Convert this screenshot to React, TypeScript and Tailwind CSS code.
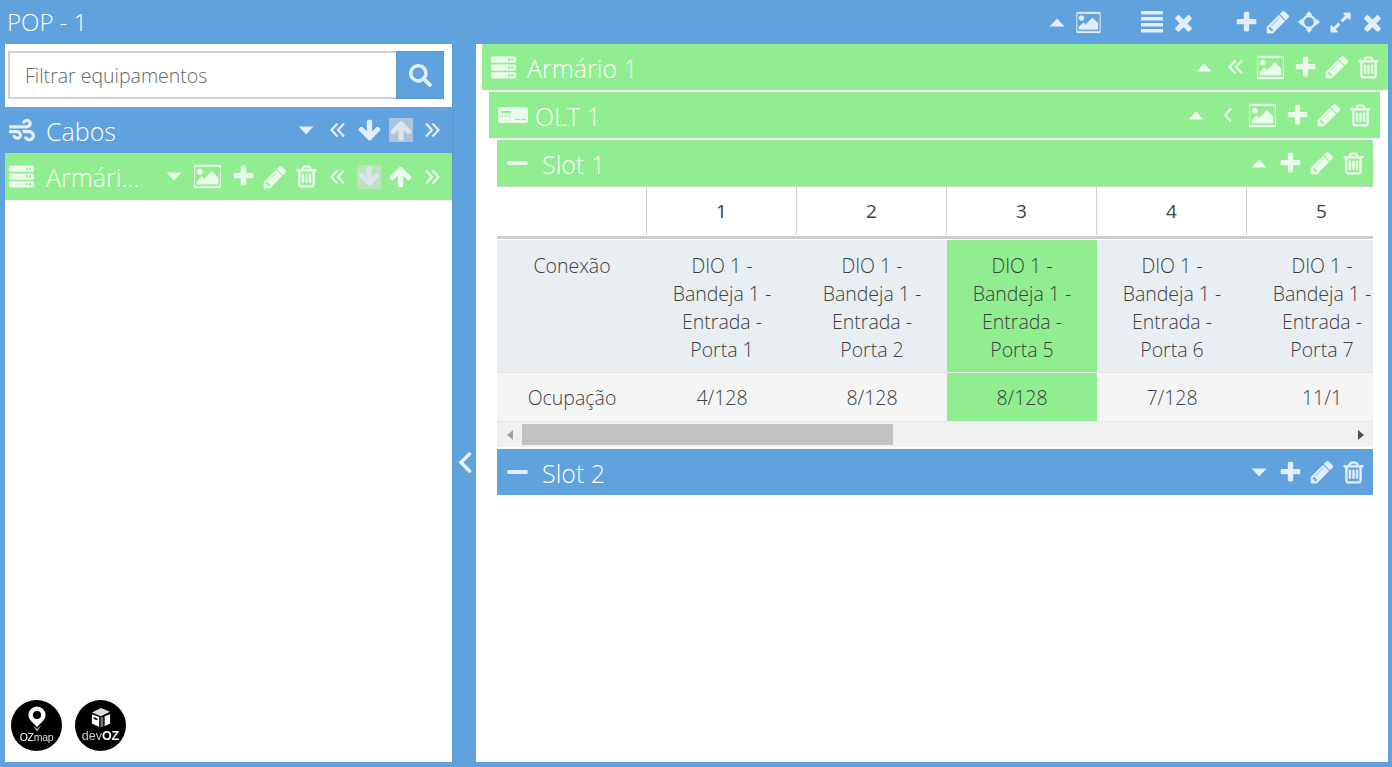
import React from 'react';
import { FaExpandAlt, FaSearch, FaServer, FaWind } from 'react-icons/fa';

const FA4 = {
  plus: 'M1600 736v192q0 40-28 68t-68 28h-416v416q0 40-28 68t-68 28h-192q-40 0-68-28t-28-68v-416h-416q-40 0-68-28t-28-68v-192q0-40 28-68t68-28h416v-416q0-40 28-68t68-28h192q40 0 68 28t28 68v416h416q40 0 68 28t28 68z',
  pencil: 'M491 1536l91-91-235-235-91 91v107h128v128h107zm523-928q0-22-22-22-10 0-17 7l-542 542q-7 7-7 17 0 22 22 22 10 0 17-7l542-542q7-7 7-17zm-54-192l416 416-832 832h-416v-416zm683 96q0 53-37 90l-166 166-416-416 166-165q36-38 90-38 53 0 91 38l235 234q37 39 37 91z',
  trash: 'M704 736v576q0 14-9 23t-23 9h-64q-14 0-23-9t-9-23v-576q0-14 9-23t23-9h64q14 0 23 9t9 23zm256 0v576q0 14-9 23t-23 9h-64q-14 0-23-9t-9-23v-576q0-14 9-23t23-9h64q14 0 23 9t9 23zm256 0v576q0 14-9 23t-23 9h-64q-14 0-23-9t-9-23v-576q0-14 9-23t23-9h64q14 0 23 9t9 23zm128 724v-948h-896v948q0 22 7 40.5t14.5 27 10.5 8.5h832q3 0 10.5-8.5t14.5-27 7-40.5zm-672-1076h448l-48-117q-7-9-17-11h-317q-10 2-17 11zm928 32v64q0 14-9 23t-23 9h-96v948q0 83-47 143.5t-113 60.5h-832q-66 0-113-58.5t-47-141.5v-952h-96q-14 0-23-9t-9-23v-64q0-14 9-23t23-9h309l70-167q15-37 54-63t79-26h320q40 0 79 26t54 63l70 167h309q14 0 23 9t9 23z',
  image: 'M576 576q0 80-56 136t-136 56-136-56-56-136 56-136 136-56 136 56 56 136zm1024 384v448h-1408v-192l320-320 160 160 512-512zm96-704h-1600q-13 0-22.5 9.5t-9.5 22.5v1216q0 13 9.5 22.5t22.5 9.5h1600q13 0 22.5-9.5t9.5-22.5v-1216q0-13-9.5-22.5t-22.5-9.5zm160 32v1216q0 66-47 113t-113 47h-1600q-66 0-113-47t-47-113v-1216q0-66 47-113t113-47h1600q66 0 113 47t47 113z',
  times: 'M1490 1322q0 40-28 68l-136 136q-28 28-68 28t-68-28l-294-294-294 294q-28 28-68 28t-68-28l-136-136q-28-28-28-68t28-68l294-294-294-294q-28-28-28-68t28-68l136-136q28-28 68-28t68 28l294 294 294-294q28-28 68-28t68 28l136 136q28 28 28 68t-28 68l-294 294 294 294q28 28 28 68z',
  down: 'M1675 832q0 53-37 90l-651 652q-39 37-91 37-53 0-90-37l-651-652q-38-36-38-90 0-53 38-91l74-75q39-37 91-37 53 0 90 37l294 294v-704q0-52 38-90t90-38h128q52 0 90 38t38 90v704l294-294q37-37 90-37 52 0 91 37l75 75q37 39 37 91z',
  up: 'M1675 971q0 51-37 90l-75 75q-38 38-91 38-54 0-90-38l-294-293v704q0 52-37.5 84.5t-90.5 32.5h-128q-53 0-90.5-32.5t-37.5-84.5v-704l-294 293q-36 38-90 38t-90-38l-75-75q-38-38-38-90 0-53 38-91l651-651q35-37 90-37 54 0 91 37l651 651q37 39 37 91z',
};

const Fa4 = ({ d, className, heavy }: { d: string; className?: string; heavy?: number }) => (
  <svg viewBox="0 0 1792 1792" fill="currentColor" stroke="currentColor" strokeWidth={heavy ?? 0} className={className}>
    <path d={d} />
  </svg>
);

const Plus = () => <Fa4 d={FA4.plus} className="w-[25px] h-[25px]" />;
const Pencil = () => <Fa4 d={FA4.pencil} heavy={25} className="w-[26px] h-[26px]" />;
const Trash = () => <Fa4 d={FA4.trash} heavy={45} className="w-[25px] h-[25px]" />;
const Picture = () => <Fa4 d={FA4.image} heavy={20} className="w-[27px] h-[27px]" />;
const Times = () => <Fa4 d={FA4.times} className="w-[25px] h-[25px]" />;
const ArrowDown = () => <Fa4 d={FA4.down} className="w-[25px] h-[25px]" />;
const ArrowUp = () => <Fa4 d={FA4.up} className="w-[25px] h-[25px]" />;

const CaretUp = () => (
  <svg viewBox="0 0 16 9" fill="currentColor" className="w-[16px] h-[9px]">
    <path d="M8 0.5 15.5 8.5H0.5Z" />
  </svg>
);
const CaretDown = () => (
  <svg viewBox="0 0 16 9" fill="currentColor" className="w-[16px] h-[9px]">
    <path d="M0.5 0.5H15.5L8 8.5Z" />
  </svg>
);
const DoubleLeft = () => (
  <svg viewBox="0 0 16 16" fill="none" stroke="currentColor" strokeWidth="2.2" className="w-[16px] h-[16px]">
    <path d="M7.5 1.5 1.5 8l6 6.5M14 1.5 8 8l6 6.5" />
  </svg>
);
const DoubleRight = () => (
  <svg viewBox="0 0 16 16" fill="none" stroke="currentColor" strokeWidth="2.2" className="w-[16px] h-[16px]">
    <path d="M2 1.5 8 8l-6 6.5M8.5 1.5l6 6.5-6 6.5" />
  </svg>
);
const SingleLeft = () => (
  <svg viewBox="0 0 10 16" fill="none" stroke="currentColor" strokeWidth="2.2" className="w-[10px] h-[16px]">
    <path d="M8 1.5 2 8l6 6.5" />
  </svg>
);
const Bars = () => (
  <svg viewBox="0 0 22 22" fill="currentColor" className="w-[22px] h-[22px]">
    <rect x="0" y="0" width="22" height="3.6" rx="0.6" />
    <rect x="0" y="6" width="22" height="3.6" rx="0.6" />
    <rect x="0" y="12" width="22" height="3.6" rx="0.6" />
    <rect x="0" y="18" width="22" height="3.6" rx="0.6" />
  </svg>
);
const Move = () => (
  <svg viewBox="0 0 22 22" className="w-[22px] h-[22px]">
    <circle cx="11" cy="11" r="6" fill="none" stroke="currentColor" strokeWidth="2.4" />
    <path fill="currentColor" d="M11 0l3.4 4H7.600zM11 22l-3.400-4h6.800zM0 11l4-3.400v6.800zM22 11l-4 3.400V7.600z" />
  </svg>
);
const Minus = () => <div className="w-[21px] h-[4px] rounded-full bg-current" />;
const OltIcon = () => (
  <svg viewBox="0 0 30 16" className="w-[30px] h-[16px]">
    <path
      fill="currentColor"
      fillRule="evenodd"
      d="M2 0h26a2 2 0 0 1 2 2v12a2 2 0 0 1-2 2H2a2 2 0 0 1-2-2V2a2 2 0 0 1 2-2zM3 4v2h10V4zM3 8.500v1.200h2V8.500zM6.500 8.500v1.200h2V8.500zM10 8.500v1.200h2V8.500zM17 12v1h5v-1zM23 12v1h5v-1z"
    />
  </svg>
);

const Tool = ({ children, active }: { children: React.ReactNode; active?: boolean }) => (
  <div className="w-[31.5px] h-[32px] shrink-0 flex items-center justify-center">
    {active ? (
      <div className="w-[24px] h-[24px] flex items-center justify-center bg-[#dcdcdc]/60 text-[#dce4ea] overflow-hidden">{children}</div>
    ) : (
      children
    )}
  </div>
);

const Bar = ({
  green,
  icon,
  title,
  tall,
  children,
}: {
  green?: boolean;
  icon: React.ReactNode;
  title: string;
  tall?: boolean;
  children: React.ReactNode;
}) => (
  <div className={`${tall ? 'h-[47px]' : 'h-[46px]'} flex items-center shrink-0 pr-[4px] ${green ? 'bg-[#90ee90] text-[#ebfaeb]' : 'bg-[#5fa2dd] text-[#e3eefa]'}`}>
    {icon}
    <span className="text-[25px] font-light leading-none whitespace-nowrap text-white mt-[2px]">{title}</span>
    <div className="ml-auto flex items-center">{children}</div>
  </div>
);

const columns = [
  { n: 1, con: 'Porta 1', occ: '4/128' },
  { n: 2, con: 'Porta 2', occ: '8/128' },
  { n: 3, con: 'Porta 5', occ: '8/128', hit: true },
  { n: 4, con: 'Porta 6', occ: '7/128' },
  { n: 5, con: 'Porta 7', occ: '11/1' },
];

const App: React.FC = () => {
  return (
    <div
      className="w-[1392px] h-[767px] bg-[#5fa2dd] flex flex-col overflow-hidden"
      style={{ fontFamily: '"Open Sans", sans-serif' }}
    >
      {/* Window header */}
      <div className="h-[44px] shrink-0 flex items-center pl-[7px] pr-[4px] text-[#e3eefa]">
        <span className="text-[24px] font-light leading-none text-white">POP - 1</span>
        <div className="ml-auto flex items-center">
          <Tool><CaretUp /></Tool>
          <Tool><div className="scale-90 flex"><Picture /></div></Tool>
          <div className="w-[32px]" />
          <Tool><Bars /></Tool>
          <Tool><Times /></Tool>
          <div className="w-[31.5px]" />
          <Tool><Plus /></Tool>
          <Tool><Pencil /></Tool>
          <Tool><Move /></Tool>
          <Tool><FaExpandAlt className="w-[23px] h-[23px]" /></Tool>
          <Tool><Times /></Tool>
        </div>
      </div>

      <div className="flex-1 flex pl-[5px] pr-[4px] pb-[5px] min-h-0">
        {/* Left tree */}
        <div className="w-[447px] shrink-0 bg-white flex flex-col relative">
          <div className="h-[63px] shrink-0 flex items-start pt-[7px] pl-[3px] pr-[8px]">
            <div className="flex-1 h-[48px] border-2 border-[#d0d0d0] border-r-0 flex items-center pl-[15px] pt-[2px] text-[19.5px] font-light text-[#666]">
              Filtrar equipamentos
            </div>
            <div className="w-[48px] h-[48px] bg-[#5fa2dd] border border-[#5795cc] flex items-center justify-center text-[#e3eefa]">
              <FaSearch className="w-[23px] h-[23px]" />
            </div>
          </div>
          <Bar icon={<div className="w-[41px] pl-[4px] flex"><FaWind className="w-[26px] h-[26px]" /></div>} title="Cabos">
            <Tool><CaretDown /></Tool>
            <Tool><DoubleLeft /></Tool>
            <Tool><ArrowDown /></Tool>
            <Tool active><ArrowUp /></Tool>
            <Tool><DoubleRight /></Tool>
          </Bar>
          <Bar green tall icon={<div className="w-[41px] pl-[4px] flex"><FaServer className="w-[25px] h-[25px]" /></div>} title="Armári...">
            <Tool><CaretDown /></Tool>
            <div className="w-[2.5px]" />
            <Tool><Picture /></Tool>
            <div className="w-[4px]" />
            <Tool><Plus /></Tool>
            <Tool><Pencil /></Tool>
            <Tool><Trash /></Tool>
            <Tool><DoubleLeft /></Tool>
            <Tool active><ArrowDown /></Tool>
            <Tool><ArrowUp /></Tool>
            <Tool><DoubleRight /></Tool>
          </Bar>
          <div className="absolute left-[6px] bottom-[11px] flex gap-[13px] blur-[0.3px]">
            <div className="w-[51px] h-[51px] rounded-full bg-black text-white flex flex-col items-center pt-[6px]">
              <svg viewBox="0 0 20 28" className="w-[18px] h-[26px]">
                <path fill="#fff" fillRule="evenodd" d="M10 0a9.500 9.500 0 0 1 9.500 9.500c0 4-3 6.500-4.500 8.500L10 23l-5-5C3.500 16 .5 13.500.5 9.500A9.500 9.500 0 0 1 10 0zm0 5a4.500 4.500 0 1 0 0 9 4.500 4.500 0 0 0 0-9z" />
                <path fill="#bbb" d="M5 21l5 7 5-7-5 4z" />
              </svg>
              <span className="text-[10.5px] leading-none tracking-tight font-medium" style={{ fontFamily: '"Liberation Sans", sans-serif' }}>
                OZ<span className="font-light text-[#ddd]">map</span>
              </span>
            </div>
            <div className="w-[51px] h-[51px] rounded-full bg-black text-white flex flex-col items-center pt-[8px]">
              <svg viewBox="0 0 22 22" className="w-[20px] h-[20px]">
                <path fill="#ddd" d="M1 5l10-5 10 4-10 5z" />
                <path fill="#fff" d="M1 7l8 3v11l-8-4zM15 9l6-2v10l-6 3z" />
                <path fill="#777" d="M10.500 10.500l3-1v11l-3 1z" />
                <path fill="#000" d="M3 10l4 1.500v2L3 12z" />
              </svg>
              <span className="text-[12.5px] leading-none mt-[2px] text-[#ccc] font-light" style={{ fontFamily: '"Liberation Sans", sans-serif' }}>
                dev<span className="font-bold text-white">OZ</span>
              </span>
            </div>
          </div>
        </div>

        {/* Splitter */}
        <div className="w-[24px] shrink-0 border-l border-[#5795cc] flex items-center justify-center text-[#eef5fc]">
          <svg viewBox="0 0 14 21" fill="none" stroke="currentColor" strokeWidth="3.5" strokeLinecap="round" className="w-[14px] h-[21px] mt-[118px]">
            <path d="M11.500 2 3 10.500 11.500 19" />
          </svg>
        </div>

        {/* Right detail */}
        <div className="flex-1 min-w-0 bg-white pl-[6px] flex flex-col">
          <Bar green icon={<div className="w-[45px] pl-[9px] flex"><FaServer className="w-[25px] h-[25px]" /></div>} title="Armário 1">
            <Tool><CaretUp /></Tool>
            <div className="w-[0.5px]" />
            <Tool><DoubleLeft /></Tool>
            <div className="w-[2.5px]" />
            <Tool><Picture /></Tool>
            <div className="w-[3.5px]" />
            <Tool><Plus /></Tool>
            <Tool><Pencil /></Tool>
            <Tool><Trash /></Tool>
          </Bar>
          <div className="pl-[7px] pr-[8px] pt-[2px]">
            <Bar green icon={<div className="w-[46px] pl-[9px] flex"><OltIcon /></div>} title="OLT 1">
              <Tool><CaretUp /></Tool>
              <div className="w-[0.5px]" />
              <Tool><SingleLeft /></Tool>
              <div className="w-[2.5px]" />
              <Tool><Picture /></Tool>
              <div className="w-[3.5px]" />
              <Tool><Plus /></Tool>
              <Tool><Pencil /></Tool>
              <Tool><Trash /></Tool>
            </Bar>
          </div>
          <div className="pl-[15px] pr-[15px] pt-[2px] flex flex-col">
            <Bar green icon={<div className="w-[45px] pl-[10px] flex"><Minus /></div>} title="Slot 1">
              <Tool><CaretUp /></Tool>
              <Tool><Plus /></Tool>
              <Tool><Pencil /></Tool>
              <Tool><Trash /></Tool>
            </Bar>

            {/* Ports table */}
            <div className="overflow-hidden text-[19.5px] font-light text-[#404040] border-t border-[#d0d0d0]">
              <div className="flex h-[52px] border-b-[3px] border-[#cfcfcf] w-[1000px]">
                <div className="w-[149px] shrink-0" />
                {columns.map((c) => (
                  <div key={c.n} className="w-[150px] h-[48px] shrink-0 border-l border-[#d0d0d0] flex items-center justify-center text-[19px] font-normal pt-[1px]">
                    {c.n}
                  </div>
                ))}
              </div>
              <div className="flex h-[134px] w-[1000px] bg-[#e9eef2] border-t border-white leading-[28px] border-b border-b-[#e4e4e4]">
                <div className="w-[150px] shrink-0 text-center pt-[12px]">Conexão</div>
                {columns.map((c) => (
                  <div key={c.n} className={`w-[150px] shrink-0 text-center pt-[12px] ${c.hit ? 'bg-[#90ee90]' : ''}`}>
                    DIO 1 -<br />Bandeja 1 -<br />Entrada -<br />{c.con}
                  </div>
                ))}
              </div>
              <div className="flex h-[48px] w-[1000px] bg-[#f5f5f5] items-stretch">
                <div className="w-[150px] shrink-0 flex items-center justify-center pt-[2px]">Ocupação</div>
                {columns.map((c) => (
                  <div key={c.n} className={`w-[150px] shrink-0 flex items-center justify-center pt-[2px] ${c.hit ? 'bg-[#90ee90]' : ''}`}>
                    {c.occ}
                  </div>
                ))}
              </div>
            </div>

            {/* Horizontal scrollbar */}
            <div className="h-[26px] bg-[#f0f0f0] border-t border-[#e6e6e6] flex items-center">
              <div className="w-[25px] flex justify-center">
                <div className="w-0 h-0 border-y-[5px] border-y-transparent border-r-[6px] border-r-[#a3a3a3]" />
              </div>
              <div className="w-[371px] h-[21px] bg-[#c1c1c1]" />
              <div className="ml-auto w-[25px] flex justify-center">
                <div className="w-0 h-0 border-y-[5px] border-y-transparent border-l-[6px] border-l-[#505050]" />
              </div>
            </div>

            <div className="h-[2px]" />
            <Bar icon={<div className="w-[45px] pl-[10px] flex"><Minus /></div>} title="Slot 2">
              <Tool><CaretDown /></Tool>
              <Tool><Plus /></Tool>
              <Tool><Pencil /></Tool>
              <Tool><Trash /></Tool>
            </Bar>
          </div>
        </div>
      </div>
    </div>
  );
};

export default App;
